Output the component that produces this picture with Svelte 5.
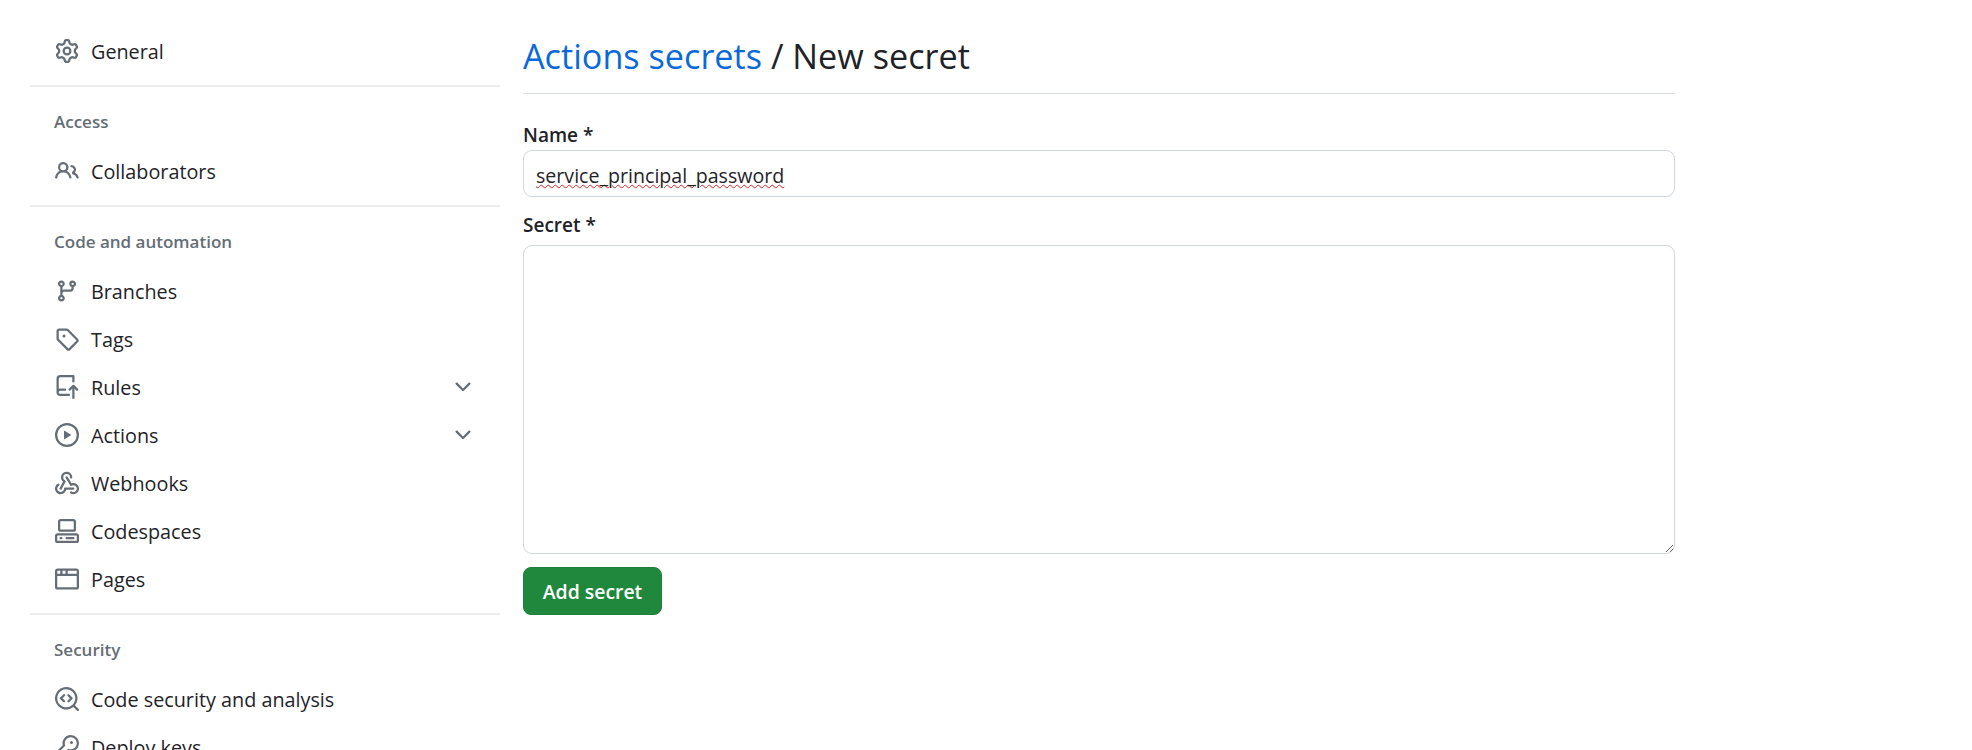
<script lang="ts">
  const icons = {
    gear: 'M8 0a8.2 8.2 0 0 1 .701.031C9.444.095 9.99.645 10.16 1.29l.288 1.107c.018.066.079.158.212.224.231.114.454.243.668.386.123.082.233.09.299.071l1.103-.303c.644-.176 1.392.021 1.82.63.27.385.506.792.704 1.218.315.675.111 1.422-.364 1.891l-.814.806c-.049.048-.098.147-.088.294.016.257.016.515 0 .772-.01.147.038.246.088.294l.814.806c.475.469.679 1.216.364 1.891a7.977 7.977 0 0 1-.704 1.217c-.428.61-1.176.807-1.82.63l-1.102-.302c-.067-.019-.177-.011-.3.071a5.909 5.909 0 0 1-.668.386c-.133.066-.194.158-.211.224l-.29 1.106c-.168.646-.715 1.196-1.458 1.26a8.006 8.006 0 0 1-1.402 0c-.743-.064-1.289-.614-1.458-1.26l-.289-1.106c-.018-.066-.079-.158-.212-.224a5.738 5.738 0 0 1-.668-.386c-.123-.082-.233-.09-.299-.071l-1.103.303c-.644.176-1.392-.021-1.82-.63a8.12 8.12 0 0 1-.704-1.218c-.315-.675-.111-1.422.363-1.891l.815-.806c.05-.048.098-.147.088-.294a6.214 6.214 0 0 1 0-.772c.01-.147-.038-.246-.088-.294l-.815-.806C.635 6.045.431 5.298.746 4.623a7.92 7.92 0 0 1 .704-1.217c.428-.61 1.176-.807 1.82-.63l1.102.302c.067.019.177.011.3-.071.214-.143.437-.272.668-.386.133-.066.194-.158.211-.224l.29-1.106C6.009.645 6.556.095 7.299.03 7.53.01 7.764 0 8 0Zm-.571 1.525c-.036.003-.108.036-.137.146l-.289 1.105c-.147.561-.549.967-.998 1.189-.173.086-.34.183-.5.29-.417.278-.97.423-1.529.27l-1.103-.303c-.109-.03-.175.016-.195.045-.22.312-.412.644-.573.99-.014.031-.021.11.059.19l.815.806c.411.406.562.957.53 1.456a4.709 4.709 0 0 0 0 .582c.032.499-.119 1.05-.53 1.456l-.815.806c-.081.08-.073.159-.059.19.162.346.353.677.573.989.02.03.085.076.195.046l1.102-.303c.56-.153 1.113-.008 1.53.27.161.107.328.204.501.29.447.222.85.629.997 1.189l.289 1.105c.029.109.101.143.137.146a6.6 6.6 0 0 0 1.142 0c.036-.003.108-.036.137-.146l.289-1.105c.147-.561.549-.967.998-1.189.173-.086.34-.183.5-.29.417-.278.97-.423 1.529-.27l1.103.303c.109.029.175-.016.195-.045.22-.313.411-.644.573-.99.014-.031.021-.11-.059-.19l-.815-.806c-.411-.406-.562-.957-.53-1.456a4.709 4.709 0 0 0 0-.582c-.032-.499.119-1.05.53-1.456l.815-.806c.081-.08.073-.159.059-.19a6.464 6.464 0 0 0-.573-.989c-.02-.03-.085-.076-.195-.046l-1.102.303c-.56.153-1.113.008-1.53-.27a4.44 4.44 0 0 0-.501-.29c-.447-.222-.85-.629-.997-1.189l-.289-1.105c-.029-.11-.101-.143-.137-.146a6.6 6.6 0 0 0-1.142 0ZM11 8a3 3 0 1 1-6 0 3 3 0 0 1 6 0ZM9.5 8a1.5 1.5 0 1 0-3.001.001A1.5 1.5 0 0 0 9.5 8Z',
    people: 'M2 5.5a3.5 3.5 0 1 1 5.898 2.549 5.508 5.508 0 0 1 3.034 4.084.75.75 0 1 1-1.482.235 4 4 0 0 0-7.9 0 .75.75 0 0 1-1.482-.236A5.507 5.507 0 0 1 3.102 8.05 3.493 3.493 0 0 1 2 5.5ZM11 4a3.001 3.001 0 0 1 2.22 5.018 5.01 5.01 0 0 1 2.56 3.012.749.749 0 0 1-.885.954.752.752 0 0 1-.549-.514 3.507 3.507 0 0 0-2.522-2.372.75.75 0 0 1-.574-.73v-.352a.75.75 0 0 1 .416-.672A1.5 1.5 0 0 0 11 5.5.75.75 0 0 1 11 4Zm-5.5-.5a2 2 0 1 0-.001 3.999A2 2 0 0 0 5.5 3.5Z',
    branch: 'M9.5 3.25a2.25 2.25 0 1 1 3 2.122V6A2.5 2.5 0 0 1 10 8.5H6a1 1 0 0 0-1 1v1.128a2.251 2.251 0 1 1-1.5 0V5.372a2.25 2.25 0 1 1 1.5 0v1.836A2.493 2.493 0 0 1 6 7h4a1 1 0 0 0 1-1v-.628A2.25 2.25 0 0 1 9.5 3.25Zm-6 0a.75.75 0 1 0 1.5 0 .75.75 0 0 0-1.5 0Zm8.25-.75a.75.75 0 1 0 0 1.5.75.75 0 0 0 0-1.5ZM4.25 12a.75.75 0 1 0 0 1.5.75.75 0 0 0 0-1.5Z',
    tag: 'M1 7.775V2.75C1 1.784 1.784 1 2.75 1h5.025c.464 0 .91.184 1.238.513l6.25 6.25a1.75 1.75 0 0 1 0 2.474l-5.026 5.026a1.75 1.75 0 0 1-2.474 0l-6.25-6.25A1.752 1.752 0 0 1 1 7.775Zm1.5 0c0 .066.026.13.073.177l6.25 6.25a.25.25 0 0 0 .354 0l5.025-5.025a.25.25 0 0 0 0-.354l-6.25-6.25a.25.25 0 0 0-.177-.073H2.75a.25.25 0 0 0-.25.25ZM6 5a1 1 0 1 1 0 2 1 1 0 0 1 0-2Z',
    push: 'M1 2.5A2.5 2.5 0 0 1 3.5 0h8.75a.75.75 0 0 1 .75.75v3.5a.75.75 0 0 1-1.5 0V1.5h-8a1 1 0 0 0-1 1v6.708A2.493 2.493 0 0 1 3.5 9h3.25a.75.75 0 0 1 0 1.5H3.5a1 1 0 0 0 0 2h5.75a.75.75 0 0 1 0 1.5H3.5A2.5 2.5 0 0 1 1 11.5Zm13.23 7.79h-.001l-1.224-1.224v6.184a.75.75 0 0 1-1.5 0V9.066L10.28 10.29a.75.75 0 0 1-1.06-1.061l2.505-2.504a.75.75 0 0 1 1.06 0L15.29 9.23a.751.751 0 0 1-.018 1.042.751.751 0 0 1-1.042.018Z',
    play: 'M8 0a8 8 0 1 1 0 16A8 8 0 0 1 8 0ZM1.5 8a6.5 6.5 0 1 0 13 0 6.5 6.5 0 0 0-13 0Zm4.879-2.773 4.264 2.559a.25.25 0 0 1 0 .428l-4.264 2.559A.25.25 0 0 1 6 10.559V5.442a.25.25 0 0 1 .379-.215Z',
    webhook: 'M5.5 4.25a2.25 2.25 0 0 1 4.5 0 .75.75 0 0 0 1.5 0 3.75 3.75 0 1 0-6.14 2.889l-2.272 4.258a.75.75 0 0 0 1.324.706L7 7.25a.75.75 0 0 0-.309-1.015A2.25 2.25 0 0 1 5.5 4.25ZM7.364 3.607a.75.75 0 0 1 1.03.257l2.608 4.349a3.75 3.75 0 1 1-.628 6.785.75.75 0 0 1 .752-1.299 2.25 2.25 0 1 0-.033-3.88.75.75 0 0 1-1.03-.256L7.107 4.636a.75.75 0 0 1 .257-1.03ZM2.9 8.776A.75.75 0 0 1 2.625 9.8 2.25 2.25 0 1 0 6 11.75a.75.75 0 0 1 .75-.751h5.5a.75.75 0 0 1 0 1.5H7.425a3.751 3.751 0 1 1-5.55-3.998.75.75 0 0 1 1.024.274Z',
    codespaces: 'M0 11.25c0-.966.784-1.75 1.75-1.75h12.5c.966 0 1.75.784 1.75 1.75v3A1.75 1.75 0 0 1 14.25 16H1.75A1.75 1.75 0 0 1 0 14.25Zm2-9.5C2 .784 2.784 0 3.75 0h8.5C13.216 0 14 .784 14 1.75v5a1.75 1.75 0 0 1-1.75 1.75h-8.5A1.75 1.75 0 0 1 2 6.75Zm1.75-.25a.25.25 0 0 0-.25.25v5c0 .138.112.25.25.25h8.5a.25.25 0 0 0 .25-.25v-5a.25.25 0 0 0-.25-.25Zm-2 9.5a.25.25 0 0 0-.25.25v3c0 .138.112.25.25.25h12.5a.25.25 0 0 0 .25-.25v-3a.25.25 0 0 0-.25-.25ZM7 12.75a.75.75 0 0 1 .75-.75h4.5a.75.75 0 0 1 0 1.5h-4.5a.75.75 0 0 1-.75-.75Zm-4 0a.75.75 0 0 1 .75-.75h.5a.75.75 0 0 1 0 1.5h-.5a.75.75 0 0 1-.75-.75Z',
    browser: 'M0 2.75C0 1.784.784 1 1.75 1h12.5c.966 0 1.75.784 1.75 1.75v10.5A1.75 1.75 0 0 1 14.25 15H1.75A1.75 1.75 0 0 1 0 13.25ZM14.5 6h-13v7.25c0 .138.112.25.25.25h12.5a.25.25 0 0 0 .25-.25Zm-6-3.5v2h6V2.75a.25.25 0 0 0-.25-.25ZM5 2.5v2h2v-2Zm-3.25 0a.25.25 0 0 0-.25.25V4.5h2v-2Z',
    codescan: 'M8.47 4.97a.75.75 0 0 0 0 1.06L9.94 7.5 8.47 8.97a.75.75 0 1 0 1.06 1.06l2-2a.75.75 0 0 0 0-1.06l-2-2a.75.75 0 0 0-1.06 0ZM6.53 6.03a.75.75 0 0 0-1.06-1.06l-2 2a.75.75 0 0 0 0 1.06l2 2a.75.75 0 1 0 1.06-1.06L5.06 7.5l1.47-1.47ZM12.246 13.307a7.501 7.501 0 1 1 1.06-1.06l2.474 2.473a.749.749 0 0 1-.326 1.275.749.749 0 0 1-.734-.215ZM1.5 7.5a6.002 6.002 0 0 0 3.608 5.504 6.002 6.002 0 0 0 6.486-1.117.748.748 0 0 1 .292-.293A6 6 0 1 0 1.5 7.5Z',
    key: 'M10.5 0a5.499 5.499 0 1 1-1.288 10.848l-.932.932a.749.749 0 0 1-.53.22H7v.75a.749.749 0 0 1-.22.53l-.5.5a.749.749 0 0 1-.53.22H5v.75a.749.749 0 0 1-.22.53l-.5.5a.749.749 0 0 1-.53.22h-2A1.75 1.75 0 0 1 0 14.25v-2c0-.199.079-.389.22-.53l4.932-4.932A5.5 5.5 0 0 1 10.5 0Zm-4 5.5c-.001.431.069.86.205 1.269a.75.75 0 0 1-.181.768L1.5 12.56v1.69c0 .138.112.25.25.25h1.69l.06-.06v-1.19a.75.75 0 0 1 .75-.75h1.19l.06-.06v-1.19a.75.75 0 0 1 .75-.75h1.19l1.023-1.025a.75.75 0 0 1 .768-.18A4 4 0 1 0 6.5 5.5ZM11 6a1 1 0 1 1 0-2 1 1 0 0 1 0 2Z'
  }
  const chevron = 'M12.78 5.22a.749.749 0 0 1 0 1.06l-4.25 4.25a.749.749 0 0 1-1.06 0L3.22 6.28a.749.749 0 1 1 1.06-1.06L8 8.939l3.72-3.719a.749.749 0 0 1 1.06 0Z'

  const groups = [
    { items: [{ label: 'General', icon: icons.gear }] },
    { title: 'Access', items: [{ label: 'Collaborators', icon: icons.people }] },
    {
      title: 'Code and automation',
      items: [
        { label: 'Branches', icon: icons.branch },
        { label: 'Tags', icon: icons.tag },
        { label: 'Rules', icon: icons.push, more: true },
        { label: 'Actions', icon: icons.play, more: true },
        { label: 'Webhooks', icon: icons.webhook },
        { label: 'Codespaces', icon: icons.codespaces },
        { label: 'Pages', icon: icons.browser }
      ]
    },
    {
      title: 'Security',
      items: [
        { label: 'Code security and analysis', icon: icons.codescan },
        { label: 'Deploy keys', icon: icons.key }
      ]
    }
  ]
</script>

<div class="page">
  <nav class="sidebar" aria-label="Settings">
    {#each groups as group}
      <section class="group">
        {#if group.title}
          <h3>{group.title}</h3>
        {/if}
        <ul>
          {#each group.items as item}
            <li>
              <svg class="icon" viewBox="0 0 16 16" aria-hidden="true"><path d={item.icon} /></svg>
              <span>{item.label}</span>
              {#if item.more}
                <svg class="chevron" viewBox="0 0 16 16" aria-hidden="true"><path d={chevron} /></svg>
              {/if}
            </li>
          {/each}
        </ul>
      </section>
    {/each}
  </nav>

  <main class="content">
    <h1><a href="#secrets">Actions secrets</a> / New secret</h1>
    <form onsubmit={(event) => event.preventDefault()}>
      <p class="label">Name *</p>
      <div class="name-field"><span class="misspelled">service_principal_password</span></div>
      <label class="label secret-label" for="secret">Secret *</label>
      <textarea id="secret"></textarea>
      <button type="submit">Add secret</button>
    </form>
  </main>
</div>

<style>
  :global(body) {
    background: #fff;
    overflow: hidden;
  }

  .page {
    display: flex;
    height: 750px;
    overflow: hidden;
    font-family: "Open Sans", "Noto Sans", sans-serif;
    color: #1f2328;
  }

  .sidebar {
    flex: 0 0 470px;
    margin-left: 30px;
    padding-top: 27px;
  }

  .group {
    border-bottom: 2px solid #ebedf0;
    padding-bottom: 10px;
    margin-bottom: 23px;
  }

  .group:last-child {
    border-bottom: 0;
  }

  h3 {
    margin: 0 0 13px;
    padding-left: 24px;
    height: 24px;
    line-height: 24px;
    font-size: 17px;
    font-weight: 600;
    color: #656d76;
  }

  ul {
    margin: 0;
    padding: 0;
    list-style: none;
  }

  li {
    display: flex;
    align-items: center;
    height: 48px;
    padding-left: 25px;
    font-size: 19.8px;
  }

  .icon {
    flex: none;
    width: 24px;
    height: 24px;
    margin-right: 12px;
    fill: #656d76;
  }

  .chevron {
    flex: none;
    width: 24px;
    height: 24px;
    margin-left: auto;
    margin-right: 25px;
    fill: #656d76;
  }

  .content {
    flex: 0 0 1152px;
    margin-left: 23px;
    padding-top: 30px;
  }

  h1 {
    margin: 0;
    height: 63px;
    border-bottom: 1px solid #d8dee4;
    font-size: 34.2px;
    line-height: 52px;
    font-weight: 400;
  }

  h1 a {
    color: #0969da;
    text-decoration: none;
  }

  form {
    display: flex;
    flex-direction: column;
    align-items: flex-start;
    padding-top: 27px;
  }

  .label {
    margin: 0;
    height: 28px;
    line-height: 28px;
    font-size: 19px;
    font-weight: 600;
  }

  .name-field {
    box-sizing: border-box;
    width: 100%;
    height: 47px;
    margin-top: 1px;
    border: 1px solid #d0d7de;
    border-radius: 9px;
    padding: 2px 0 0 12px;
    font-size: 19.6px;
    line-height: 46px;
  }

  .misspelled {
    text-decoration: underline wavy #d8232a 1px;
    text-underline-offset: 1px;
  }

  .secret-label {
    margin-top: 14px;
  }

  textarea {
    display: block;
    box-sizing: border-box;
    width: 100%;
    height: 309px;
    margin-top: 6px;
    border: 1px solid #d0d7de;
    border-radius: 9px;
    background: #fff;
    outline: 0;
  }

  button {
    height: 48px;
    width: 139px;
    margin-top: 13px;
    border: 1px solid #1f7f3c;
    border-radius: 8px;
    background: #1f883d;
    color: #fff;
    font-family: inherit;
    font-size: 19.4px;
    font-weight: 600;
  }
</style>
